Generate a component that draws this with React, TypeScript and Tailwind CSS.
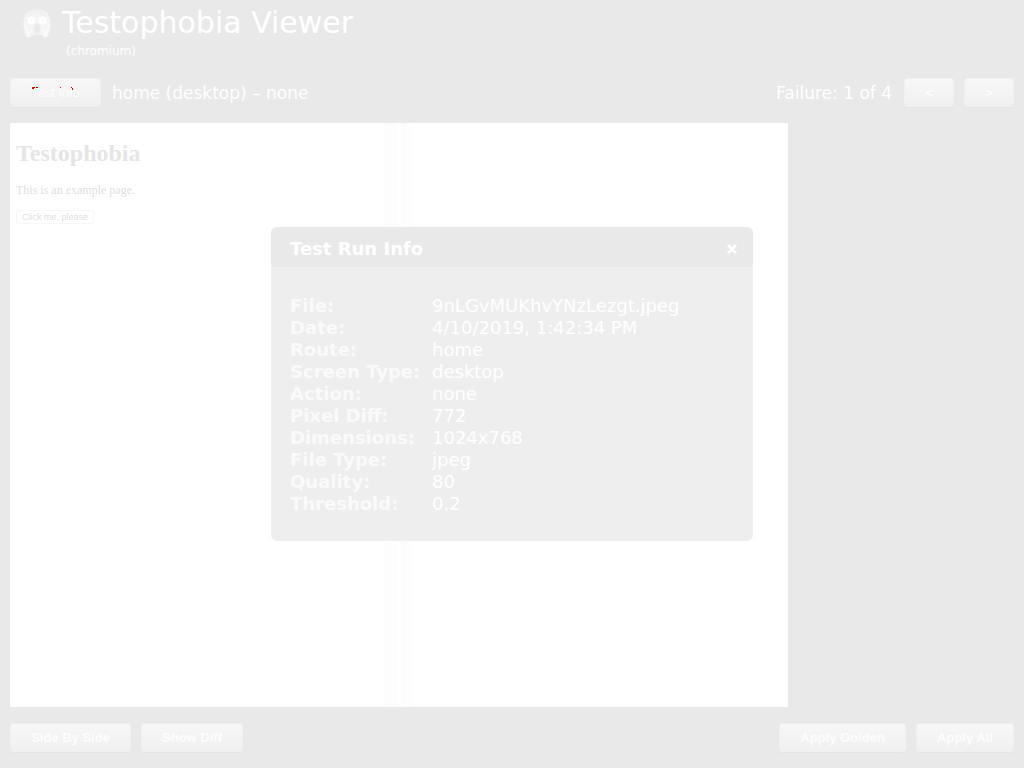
import type { ReactNode } from 'react';

const details: [string, string][] = [
  ['File:', '9nLGvMUKhvYNzLezgt.jpeg'],
  ['Date:', '4/10/2019, 1:42:34 PM'],
  ['Route:', 'home'],
  ['Screen Type:', 'desktop'],
  ['Action:', 'none'],
  ['Pixel Diff:', '772'],
  ['Dimensions:', '1024x768'],
  ['File Type:', 'jpeg'],
  ['Quality:', '80'],
  ['Threshold:', '0.2'],
];

function Button({ width, children }: { width: string; children: ReactNode }) {
  return (
    <button
      type="button"
      className={`relative h-[29px] shrink-0 rounded-[3px] border border-[#f0f0f0] bg-linear-to-b from-[#f7f7f7] to-[#f0f0f0] font-['Liberation_Sans',sans-serif] text-[13px] leading-7 text-[#fdfdfd] shadow-[0_1px_1px_#e4e4e4] ${width}`}
    >
      {children}
    </button>
  );
}

function ScreamIcon() {
  return (
    <svg viewBox="0 0 30 30" className="h-[30px] w-[30px] shrink-0" aria-hidden="true">
      <defs>
        <linearGradient id="face" x1="0" y1="0" x2="0" y2="1">
          <stop offset="0" stopColor="#efefef" />
          <stop offset="0.35" stopColor="#f6f6f6" />
          <stop offset="1" stopColor="#f5f5f5" />
        </linearGradient>
      </defs>
      <path d="M15 1C7 1 2 6 1.500 14c-.2 5 2 10 5.500 13h16c3.500-3 5.700-8 5.500-13C28 6 23 1 15 1Z" fill="url(#face)" />
      <path d="M6 8.500q2-2 5-2M19 6.500q3 0 5 2" fill="none" stroke="#ededed" />
      <circle cx="9.500" cy="12.500" r="4" fill="#fff" />
      <circle cx="20.500" cy="12.500" r="4" fill="#fff" />
      <circle cx="9.500" cy="12.500" r=".7" fill="#f5f5f5" />
      <circle cx="20.500" cy="12.500" r=".7" fill="#f5f5f5" />
      <ellipse cx="15" cy="20.500" rx="3.300" ry="4.800" fill="#eaeaea" stroke="#f0f0f0" />
      <path d="M11.500 27.500q3.500-2 7 0v2.500h-7Z" fill="#e9e9e9" />
      <path d="M2 15.500c1.500-.8 2.500.5 3 3l1.500 3 3-2c1.500 0 1.500 1.500.5 3-1 2-.5 4-1 6-2 1.500-5 1-5-1.500C2.500 23 1 18 2 15.500ZM28 15.500c-1.500-.8-2.500.5-3 3l-1.500 3-3-2c-1.500 0-1.500 1.500-.5 3 1 2 .5 4 1 6 2 1.500 5 1 5-1.500 1.500-3.500 3-8.500 2-11Z" fill="#f9f9f9" stroke="#f0f0f0" strokeWidth=".6" />
    </svg>
  );
}

export default function App() {
  return (
    <div className="relative flex min-h-screen flex-col bg-[#e9e9e9] px-[10px] pt-1 pb-4 font-['DejaVu_Sans',sans-serif] text-white">
      <header className="flex items-start gap-[10px] pl-3">
        <div className="pt-1">
          <ScreamIcon />
        </div>
        <div>
          <h1 className="text-[30px] leading-[38px]">Testophobia Viewer</h1>
          <p className="pl-1 text-[12px] leading-[18px]">(chromium)</p>
        </div>
      </header>

      <div className="mt-[18px] flex items-center text-[17px] leading-7">
        <Button width="w-[91px]">
          Test Info
          <svg viewBox="0 0 41 3" className="absolute top-2 left-[21px] h-[3px] w-[41px]" shapeRendering="crispEdges" aria-hidden="true">
            <path d="M0 0h3v1H0ZM0 1h2v1H0ZM4 0h2v1H4ZM28 0h1v1h-1ZM39 0h1v1h1v2h-1V1h-1Z" fill="#f00000" />
          </svg>
        </Button>
        <h2 className="ml-[11px] flex-1">home (desktop) – none</h2>
        <span className="mr-3">Failure: 1 of 4</span>
        <div className="flex gap-[10px] font-bold">
          <Button width="w-[50px]">&lt;</Button>
          <Button width="w-[50px]">&gt;</Button>
        </div>
      </div>

      <main className="mt-4 flex aspect-4/3 w-[77.5%] bg-white font-['Liberation_Serif',serif] text-[#dfdfdf]">
        <section className="flex-1 px-1.5 pt-4">
          <h1 className="text-[24px] leading-7 font-bold text-[#e5e5e5]">Testophobia</h1>
          <p className="mt-[15px] text-[12px] leading-4">This is an example page.</p>
          <button type="button" className="mt-3 block h-[14px] rounded-[2px] border border-[#f7f7f7] px-[5px] font-['Liberation_Sans',sans-serif] text-[9px] leading-3">
            Click me, please
          </button>
        </section>
        <div className="flex w-[30px] justify-center gap-[3px]">
          <div className="w-[14px] bg-[#fdfdfd]" />
          <div className="w-[13px] bg-linear-to-r from-[#fcfcfc] to-white" />
        </div>
        <section className="flex-1 px-1.5" />
      </main>

      <footer className="mt-4 flex justify-between">
        <div className="flex gap-[10px] font-bold">
          <Button width="w-[121px]">Side By Side</Button>
          <Button width="w-[102px]">Show Diff</Button>
        </div>
        <div className="flex gap-[10px] font-bold">
          <Button width="w-[127px]">Apply Golden</Button>
          <Button width="w-[98px]">Apply All</Button>
        </div>
      </footer>

      <div className="absolute inset-0 flex items-center justify-center">
        <section role="dialog" aria-labelledby="dialog-title" className="w-full max-w-[482px] overflow-hidden rounded-md bg-[#eeeeee] text-[18px] leading-[22px]">
          <div className="flex h-10 items-center justify-between bg-[#e9e9e9] pt-1 pr-4 pl-[19px]">
            <h2 id="dialog-title" className="font-bold">Test Run Info</h2>
            <button type="button" aria-label="Close" className="h-[10px] w-[10px]">
              <svg viewBox="0 0 10 10" className="block h-[10px] w-[10px]" aria-hidden="true">
                <path d="M2 2l6 6M8 2l-6 6" stroke="white" strokeWidth="3" strokeLinecap="round" />
              </svg>
            </button>
          </div>
          <dl className="grid grid-cols-[142px_1fr] px-[19px] pt-7 pb-[26px]">
            {details.map(([label, value]) => (
              <div key={label} className="contents">
                <dt className="font-bold text-[#fafafa]">{label}</dt>
                <dd>{value}</dd>
              </div>
            ))}
          </dl>
        </section>
      </div>
    </div>
  );
}
